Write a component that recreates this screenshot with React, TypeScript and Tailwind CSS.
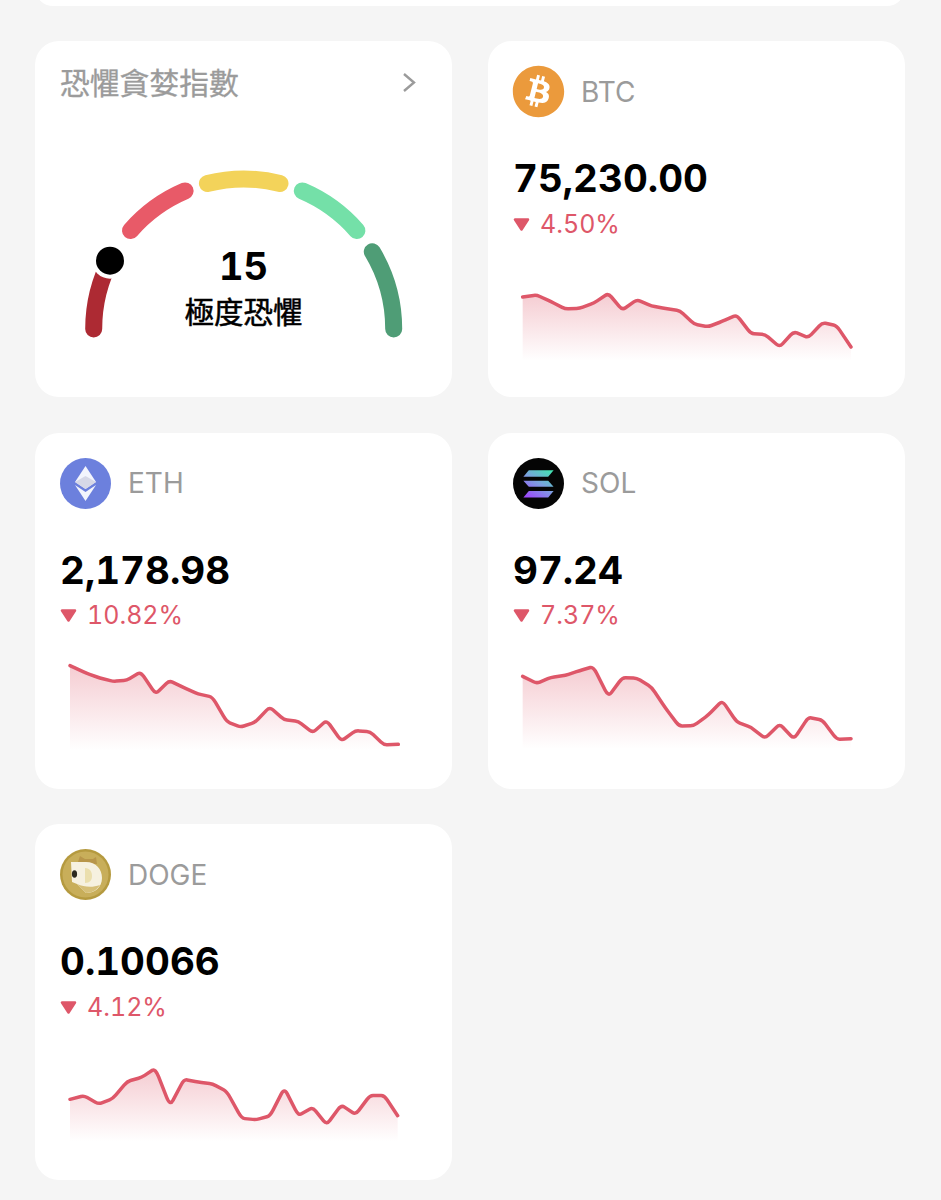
import { FaBitcoin } from 'react-icons/fa';

const RED = '#de5769';
const GRAY = '#9b9b9b';

type Pt = [number, number];

// rounds each corner of the line a little, the source chart is a soft curve
const linePath = (pts: Pt[]) => {
    let d = `M${pts[0][0]} ${pts[0][1]}`;
    for (let i = 1; i < pts.length - 1; i++) {
        const [x, y] = pts[i];
        const [px, py] = pts[i - 1];
        const [nx, ny] = pts[i + 1];
        d += ` L${x - (x - px) * 0.22} ${y - (y - py) * 0.22}`;
        d += ` Q${x} ${y} ${x + (nx - x) * 0.22} ${y + (ny - y) * 0.22}`;
    }
    const last = pts[pts.length - 1];
    return `${d} L${last[0]} ${last[1]}`;
};

const Sparkline = ({ id, pts, base }: { id: string; pts: Pt[]; base: number }) => {
    const line = linePath(pts);
    const first = pts[0][0];
    const last = pts[pts.length - 1][0];
    const gradId = `spark-${id}`;
    return (
        <svg width="370" height="110" viewBox="0 0 1110 330" className="block">
            <defs>
                <linearGradient id={gradId} x1="0" y1="0" x2="0" y2="1">
                    <stop offset="0%" stopColor={RED} stopOpacity="0.3" />
                    <stop offset="100%" stopColor={RED} stopOpacity="0" />
                </linearGradient>
            </defs>
            <path d={`${line} L${last} ${base} L${first} ${base} Z`} fill={`url(#${gradId})`} />
            <path d={line} fill="none" stroke={RED} strokeWidth="10.5" strokeLinejoin="round" strokeLinecap="round" />
        </svg>
    );
};

const BtcLogo = () => (
    <div className="w-[51px] h-[51px] shrink-0 flex items-center justify-center">
        <FaBitcoin className="w-[53px] h-[53px] shrink-0 text-[#eb9a3c]" />
    </div>
);

const EthLogo = () => (
    <svg width="51" height="51" viewBox="0 0 51 51" className="shrink-0">
        <circle cx="25.5" cy="25.5" r="25.5" fill="#6c80dd" />
        <path d="M25.5 8 L36 24 L25.5 31 L15 24 Z" fill="#ffffff" fillOpacity="0.92" />
        <path d="M25.5 18 L36 24 L25.5 31 L15 24 Z" fill="#d3d5e4" fillOpacity="0.9" />
        <path d="M15 27 L25.5 34 L36 27 L25.5 43 Z" fill="#f3f5fd" />
    </svg>
);

const SolLogo = () => (
    <svg width="51" height="51" viewBox="0 0 51 51" className="shrink-0">
        <defs>
            <linearGradient id="sol-logo" gradientUnits="userSpaceOnUse" x1="36" y1="10" x2="16" y2="41">
                <stop offset="0%" stopColor="#3fe8b0" />
                <stop offset="50%" stopColor="#7d9fe0" />
                <stop offset="100%" stopColor="#9d45fb" />
            </linearGradient>
        </defs>
        <circle cx="25.5" cy="25.5" r="25.5" fill="#050505" />
        <path d="M15.8 12.2 L40.6 12.2 L35.2 18.8 L10.4 18.8 Z" fill="url(#sol-logo)" />
        <path d="M10.4 22.8 L35.2 22.8 L40.6 28.8 L15.8 28.8 Z" fill="url(#sol-logo)" />
        <path d="M15.8 33 L40.6 33 L35.2 39.6 L10.4 39.6 Z" fill="url(#sol-logo)" />
    </svg>
);

const DogeLogo = () => (
    <svg width="51" height="51" viewBox="0 0 51 51" className="shrink-0">
        <circle cx="25.5" cy="25.5" r="25.5" fill="#b59a3f" />
        <circle cx="25.5" cy="25.5" r="23" fill="#c8ae5a" />
        <path d="M18 13 L20 7 L25 10 L33 10 L36 8 L37 15 L25 15 Z" fill="#b8964a" />
        <path d="M11 13 L26 13 C36 13 42 20 42 29 C42 38 35 44 26 44 L22 40 L17 35 L12 33 Z" fill="#f6f1e0" />
        <path d="M17 35 L22 40 L26 44 C32 44 37 41 40 36 C32 39 24 38 17 35 Z" fill="#d6bf78" />
        <ellipse cx="14.5" cy="25" rx="2.6" ry="3.8" fill="#2d2a20" />
        <path d="M25 19 C30 19 32 23 32 27 C32 31 30 34 25 34 Z" fill="#ebdfae" />
    </svg>
);

const coins = [
    {
        id: 'btc', name: 'BTC', price: '75,230.00', change: '4.50%', Logo: BtcLogo, chartClass: 'mt-[35px] ml-[17px]', base: 257,
        pts: [[53, 66], [95, 60], [138, 80], [181, 102], [224, 100], [267, 84], [310, 55], [352, 105], [396, 74], [440, 93], [482, 101], [525, 107], [568, 148], [610, 155], [652, 139], [695, 120], [738, 176], [780, 178], [824, 216], [866, 170], [910, 188], [952, 143], [995, 152], [1038, 216]] as Pt[],
    },
    {
        id: 'eth', name: 'ETH', price: '2,178.98', change: '10.82%', Logo: EthLogo, chartClass: 'mt-[18px] ml-[15px]', base: 302,
        pts: [[60, 47], [110, 70], [150, 84], [190, 94], [230, 91], [272, 66], [317, 132], [358, 92], [400, 112], [445, 132], [487, 141], [530, 215], [572, 231], [615, 217], [659, 171], [702, 209], [745, 214], [788, 248], [830, 211], [874, 273], [917, 242], [960, 245], [1002, 285], [1045, 283]] as Pt[],
    },
    {
        id: 'sol', name: 'SOL', price: '97.24', change: '7.37%', Logo: SolLogo, chartClass: 'mt-[18px] ml-[17px]', base: 297,
        pts: [[53, 79], [95, 100], [138, 82], [181, 76], [224, 62], [265, 50], [310, 140], [352, 83], [395, 84], [440, 112], [482, 175], [522, 228], [566, 227], [610, 195], [652, 152], [695, 216], [738, 232], [780, 265], [824, 222], [867, 267], [910, 202], [952, 210], [995, 268], [1038, 266]] as Pt[],
    },
    {
        id: 'doge', name: 'DOGE', price: '0.10066', change: '4.12%', Logo: DogeLogo, chartClass: 'mt-[27px] ml-[15px]', base: 274,
        pts: [[60, 148], [102, 137], [146, 162], [188, 146], [232, 94], [275, 82], [316, 55], [360, 168], [402, 88], [445, 96], [488, 102], [530, 124], [575, 205], [618, 209], [660, 198], [703, 114], [745, 197], [788, 172], [830, 224], [874, 165], [917, 194], [960, 136], [1003, 137], [1043, 197]] as Pt[],
    },
];

const CoinCard = ({ coin }: { coin: (typeof coins)[number] }) => (
    <div className="bg-white rounded-3xl h-[356px] overflow-hidden">
        <div className="px-[25px] pt-[25px]">
            <div className="flex items-center gap-[17px] h-[51px]">
                <coin.Logo />
                <span className="text-[28px] text-[#9b9b9b] leading-none">{coin.name}</span>
            </div>
            <div className="mt-[38px] text-[38.5px] leading-[46px] font-bold text-black tabular-nums">{coin.price}</div>
            <div className="mt-[7px] h-[32px] flex items-center gap-[10px]">
                <svg width="17" height="13" viewBox="0 0 17 13">
                    <path d="M2 1.5 L15 1.5 L8.5 11.5 Z" fill={RED} stroke={RED} strokeWidth="2.5" strokeLinejoin="round" />
                </svg>
                <span className="text-[25px] leading-none text-[#de5769] tabular-nums">{coin.change}</span>
            </div>
        </div>
        <div className={coin.chartClass}>
            <Sparkline id={coin.id} pts={coin.pts} base={coin.base} />
        </div>
    </div>
);

const CX = 243.7;
const CY = 329;
const R = 150;

const arc = (from: number, to: number) => {
    const pt = (a: number) => {
        const t = (a * Math.PI) / 180;
        return `${CX - R * Math.cos(t)} ${CY - R * Math.sin(t)}`;
    };
    return `M${pt(from)} A${R} ${R} 0 0 1 ${pt(to)}`;
};

const segments = [
    { from: 0, to: 28, color: '#ad2a33' },
    { from: 41, to: 67, color: '#e85a68' },
    { from: 76, to: 104, color: '#f3d35a' },
    { from: 113, to: 139, color: '#74e0a8' },
    { from: 149, to: 180, color: '#4f9d76' },
];

const FearGreedCard = () => (
    <div className="bg-white rounded-3xl h-[356px] overflow-hidden">
        <div className="px-[25px] pt-[23px] flex items-center justify-between h-[57px]">
            <span
                className="text-[29.8px] leading-[34px] text-[#9b9b9b] [-webkit-text-stroke:0.3px_#9b9b9b]"
                style={{ fontFamily: '"Noto Sans CJK TC", sans-serif' }}
            >
                恐懼貪婪指數
            </span>
            <svg width="14" height="21" viewBox="0 0 14 21" className="mr-[11px] mt-[2px]">
                <path d="M2 2 L12 10.5 L2 19" fill="none" stroke={GRAY} strokeWidth="2.4" />
            </svg>
        </div>
        <div className="relative mt-[62px] ml-[45px] w-[330px] h-[180px]">
            <svg width="330" height="180" viewBox="80 160 330 180" className="block">
                {segments.map((s) => (
                    <path key={s.from} d={arc(s.from, s.to)} fill="none" stroke={s.color} strokeWidth="17" strokeLinecap="round" />
                ))}
                <circle cx="110" cy="260.7" r="18" fill="#ffffff" />
                <circle cx="110" cy="260.7" r="14" fill="#000000" />
            </svg>
            <div className="absolute top-[84px] left-0 w-[327px] flex flex-col items-center">
                <span className="text-[38px] leading-[44px] font-bold text-black tabular-nums">15</span>
                <span
                    className="mt-[4px] text-[29.5px] leading-[36px] text-black [-webkit-text-stroke:0.5px_black]"
                    style={{ fontFamily: '"Noto Sans CJK TC", sans-serif' }}
                >
                    極度恐懼
                </span>
            </div>
        </div>
    </div>
);

export default function App() {
    return (
        <div
            className="min-h-screen bg-[#f5f5f5] px-[35px] overflow-hidden"
            style={{ fontFamily: 'Inter, "Noto Sans CJK TC", sans-serif' }}
        >
            <div className="bg-white rounded-3xl h-[36px] w-[870px] -mt-[30px]" />
            <div className="grid grid-cols-[417px_417px] gap-x-[36px] gap-y-[35.5px] mt-[35px]">
                <FearGreedCard />
                {coins.map((coin) => (
                    <CoinCard key={coin.id} coin={coin} />
                ))}
            </div>
        </div>
    );
}
